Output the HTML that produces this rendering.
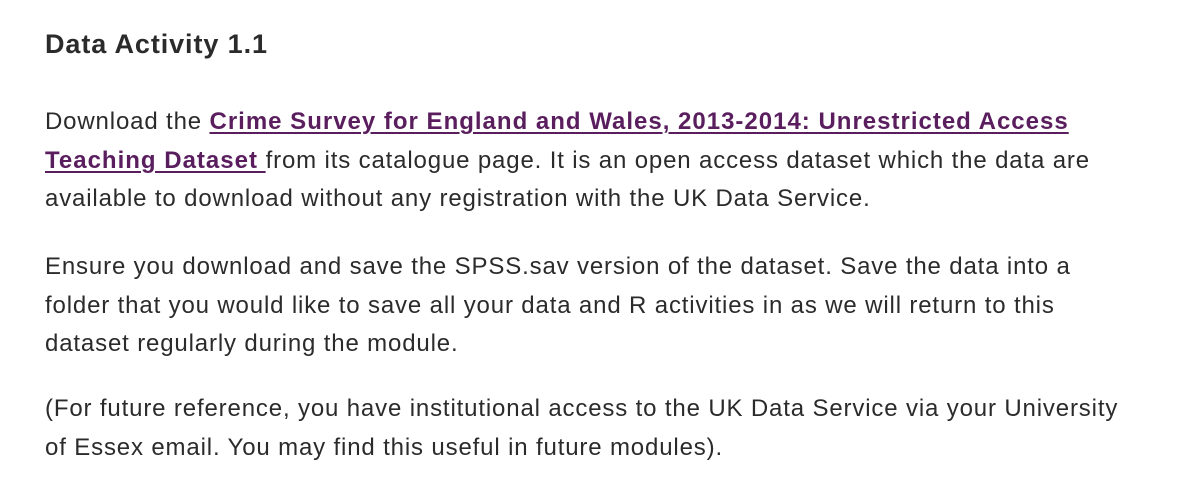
<!DOCTYPE html>
<html><head><meta charset="utf-8"><style>
html,body{margin:0;padding:0;background:#fff;width:1186px;height:500px;overflow:hidden}
body{font-family:"Liberation Sans",Arial,sans-serif;color:#2b2b2b}
h2{position:absolute;left:45px;top:28px;margin:0;font-size:27px;line-height:32px;font-weight:bold;color:#2b2b2b;letter-spacing:0.9px}
p{position:absolute;left:45px;margin:0;font-size:24px;line-height:38.5px;white-space:nowrap;letter-spacing:0.85px}
a{color:#5a1e5e;font-weight:bold;text-decoration:underline;text-decoration-thickness:2px;text-underline-offset:3px;letter-spacing:1px}
</style></head><body>
<h2>Data Activity 1.1</h2>
<p style="top:103px">Download the <a>Crime Survey for England and Wales, 2013-2014: Unrestricted Access<br>Teaching Dataset </a>from its catalogue page. It is an open access dataset which the data are<br>available to download without any registration with the UK Data Service.</p>
<p style="top:248px">Ensure you download and save the SPSS.sav version of the dataset. Save the data into a<br>folder that you would like to save all your data and R activities in as we will return to this<br>dataset regularly during the module.</p>
<p style="top:390px">(For future reference, you have institutional access to the UK Data Service via your University<br>of Essex email. You may find this useful in future modules).</p>
</body></html>
